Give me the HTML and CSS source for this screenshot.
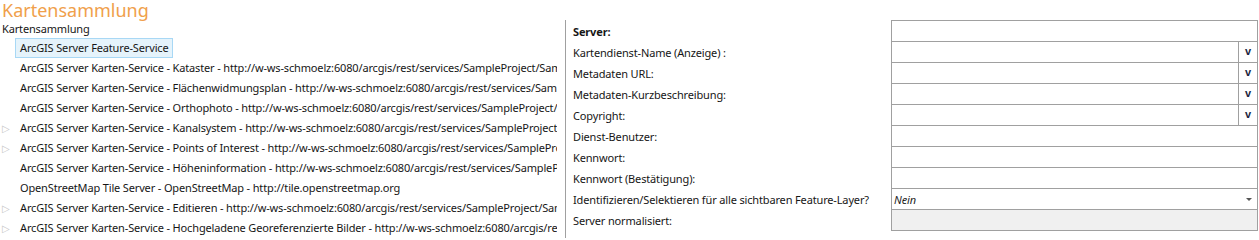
FILE: index.html
```html
<!DOCTYPE html>
<html lang="de">
<head>
<meta charset="UTF-8" />
<title>Kartensammlung</title>
<link rel="stylesheet" href="styles.css">
</head>
<body>
<h1 class="title">Kartensammlung</h1>
<div class="main">
<div class="tree">
<div class="root">Kartensammlung</div>
<ul class="items">
<li class="sel"><span class="tw"></span><span class="txt">ArcGIS Server Feature-Service</span></li>
<li><span class="tw"></span><span class="txt">ArcGIS Server Karten-Service - Kataster - http://w-ws-schmoelz:6080/arcgis/rest/services/SampleProject/Sample</span></li>
<li><span class="tw"></span><span class="txt">ArcGIS Server Karten-Service - Flächenwidmungsplan - http://w-ws-schmoelz:6080/arcgis/rest/services/SampleProject</span></li>
<li><span class="tw"></span><span class="txt">ArcGIS Server Karten-Service - Orthophoto - http://w-ws-schmoelz:6080/arcgis/rest/services/SampleProject/Ortho</span></li>
<li><span class="tw">&#9655;</span><span class="txt">ArcGIS Server Karten-Service - Kanalsystem - http://w-ws-schmoelz:6080/arcgis/rest/services/SampleProject/Kanal</span></li>
<li><span class="tw">&#9655;</span><span class="txt">ArcGIS Server Karten-Service - Points of Interest - http://w-ws-schmoelz:6080/arcgis/rest/services/SampleProject</span></li>
<li><span class="tw"></span><span class="txt">ArcGIS Server Karten-Service - Höheninformation - http://w-ws-schmoelz:6080/arcgis/rest/services/SampleProject</span></li>
<li><span class="tw"></span><span class="txt">OpenStreetMap Tile Server - OpenStreetMap - http://tile.openstreetmap.org</span></li>
<li><span class="tw">&#9655;</span><span class="txt">ArcGIS Server Karten-Service - Editieren - http://w-ws-schmoelz:6080/arcgis/rest/services/SampleProject/Sample</span></li>
<li><span class="tw">&#9655;</span><span class="txt">ArcGIS Server Karten-Service - Hochgeladene Georeferenzierte Bilder - http://w-ws-schmoelz:6080/arcgis/rest/services</span></li>
</ul>
</div>
<div class="form">
<div class="labels">
<div class="lbl b">Server:</div>
<div class="lbl">Kartendienst-Name (Anzeige) :</div>
<div class="lbl">Metadaten URL:</div>
<div class="lbl">Metadaten-Kurzbeschreibung:</div>
<div class="lbl">Copyright:</div>
<div class="lbl">Dienst-Benutzer:</div>
<div class="lbl">Kennwort:</div>
<div class="lbl">Kennwort (Bestätigung):</div>
<div class="lbl">Identifizieren/Selektieren für alle sichtbaren Feature-Layer?</div>
<div class="lbl">Server normalisiert:</div>
</div>
<div class="fields">
<div class="field"></div>
<div class="field"><span class="drop">v</span></div>
<div class="field"><span class="drop">v</span></div>
<div class="field"><span class="drop">v</span></div>
<div class="field"><span class="drop">v</span></div>
<div class="field"></div>
<div class="field"></div>
<div class="field"></div>
<div class="field combo"><i>Nein</i><span class="arrow"></span></div>
<div class="field off"></div>
</div>
</div>
</div>
</body>
</html>
```

FILE: styles.css
```css
body { margin: 0; background: #fff; font-family: "Noto Sans", sans-serif; font-size: 11px; letter-spacing: -0.15px; color: #161616; }
.title { margin: 0; padding-left: 2px; height: 20px; font-size: 18px; font-weight: normal; line-height: 20px; letter-spacing: 0; color: #f0a04b; }
.main { display: flex; }
.tree { width: 557px; margin-right: 8px; overflow: hidden; white-space: nowrap; }
.root { height: 18px; line-height: 18px; padding-left: 2px; }
.items { list-style: none; margin: 0; padding: 0; }
.items li { display: flex; align-items: center; height: 20px; }
.tw { width: 14px; flex: none; padding-left: 2px; color: #c8c8c8; font-size: 10px; }
.txt { padding: 0 3px; height: 18px; line-height: 18px; border: 1px solid transparent; }
.sel .txt { background: #e5f3fb; border-color: #a8d8f5; margin-left: -1px; padding-left: 4px; padding-right: 3px; }
.form { display: flex; }
.labels { width: 318px; border-left: 1px solid #a0a0a0; padding: 1px 0 0 7px; }
.lbl { height: 21px; line-height: 21px; white-space: nowrap; }
.b { font-weight: bold; }
.fields { width: 367px; border-top: 1px solid #a0a0a0; }
.field { box-sizing: border-box; height: 21px; border: 1px solid #a0a0a0; border-top: none; display: flex; justify-content: flex-end; align-items: stretch; }
.drop { width: 18px; border-left: 1px solid #a0a0a0; font-family: "Liberation Sans", sans-serif; font-weight: bold; font-size: 11px; color: #1a1f40; text-align: center; line-height: 19px; }
.combo { justify-content: space-between; align-items: center; padding: 0 5px 0 2px; }
.combo i { color: #1e1e1e; }
.arrow { width: 0; height: 0; border-left: 3px solid transparent; border-right: 3px solid transparent; border-top: 3px solid #555; }
.off { background: #f0f0f0; }
```
